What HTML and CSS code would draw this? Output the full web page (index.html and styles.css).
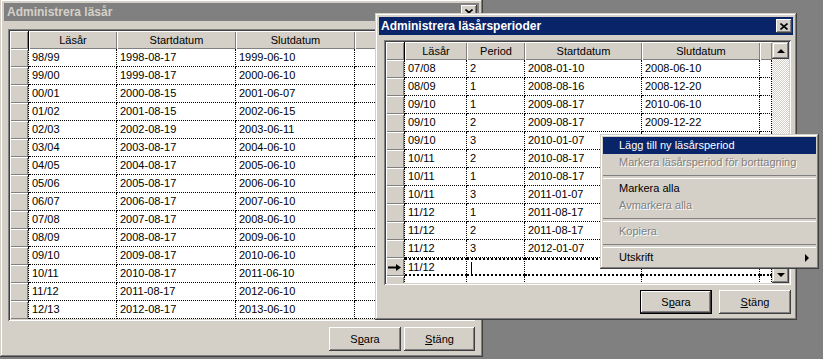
FILE: index.html
```html
<!DOCTYPE html>
<html lang="sv">
<head>
  <meta charset="UTF-8" />
  <title>Administrera läsår</title>
  <link rel="stylesheet" href="styles.css">
</head>
<body>
  <!-- Back window: läsår -->
  <div class="win win-left">
    <div class="titlebar inactive">
      <span class="title">Administrera läsår</span>
      <span class="close"><svg width="8" height="7" viewBox="0 0 8 7"><path d="M0.5 0.5L7.5 6.5M7.5 0.5L0.5 6.5" stroke="#000" stroke-width="1.6"/></svg></span>
    </div>
    <div class="win-body">
      <div class="grid grid-left">
        <div class="cells">
          <div class="row head">
            <div class="ind"></div>
            <div class="h c-l1">Läsår</div>
            <div class="h c-l2">Startdatum</div>
            <div class="h c-l3">Slutdatum</div>
            <div class="h c-rest"></div>
          </div>
          <div class="row"><div class="ind"></div><div class="c c-l1">98/99</div><div class="c c-l2">1998-08-17</div><div class="c c-l3">1999-06-10</div><div class="c c-rest"></div></div>
          <div class="row"><div class="ind"></div><div class="c c-l1">99/00</div><div class="c c-l2">1999-08-17</div><div class="c c-l3">2000-06-10</div><div class="c c-rest"></div></div>
          <div class="row"><div class="ind"></div><div class="c c-l1">00/01</div><div class="c c-l2">2000-08-15</div><div class="c c-l3">2001-06-07</div><div class="c c-rest"></div></div>
          <div class="row"><div class="ind"></div><div class="c c-l1">01/02</div><div class="c c-l2">2001-08-15</div><div class="c c-l3">2002-06-15</div><div class="c c-rest"></div></div>
          <div class="row"><div class="ind"></div><div class="c c-l1">02/03</div><div class="c c-l2">2002-08-19</div><div class="c c-l3">2003-06-11</div><div class="c c-rest"></div></div>
          <div class="row"><div class="ind"></div><div class="c c-l1">03/04</div><div class="c c-l2">2003-08-17</div><div class="c c-l3">2004-06-10</div><div class="c c-rest"></div></div>
          <div class="row"><div class="ind"></div><div class="c c-l1">04/05</div><div class="c c-l2">2004-08-17</div><div class="c c-l3">2005-06-10</div><div class="c c-rest"></div></div>
          <div class="row"><div class="ind"></div><div class="c c-l1">05/06</div><div class="c c-l2">2005-08-17</div><div class="c c-l3">2006-06-10</div><div class="c c-rest"></div></div>
          <div class="row"><div class="ind"></div><div class="c c-l1">06/07</div><div class="c c-l2">2006-08-17</div><div class="c c-l3">2007-06-10</div><div class="c c-rest"></div></div>
          <div class="row"><div class="ind"></div><div class="c c-l1">07/08</div><div class="c c-l2">2007-08-17</div><div class="c c-l3">2008-06-10</div><div class="c c-rest"></div></div>
          <div class="row"><div class="ind"></div><div class="c c-l1">08/09</div><div class="c c-l2">2008-08-17</div><div class="c c-l3">2009-06-10</div><div class="c c-rest"></div></div>
          <div class="row"><div class="ind"></div><div class="c c-l1">09/10</div><div class="c c-l2">2009-08-17</div><div class="c c-l3">2010-06-10</div><div class="c c-rest"></div></div>
          <div class="row"><div class="ind"></div><div class="c c-l1">10/11</div><div class="c c-l2">2010-08-17</div><div class="c c-l3">2011-06-10</div><div class="c c-rest"></div></div>
          <div class="row"><div class="ind"></div><div class="c c-l1">11/12</div><div class="c c-l2">2011-08-17</div><div class="c c-l3">2012-06-10</div><div class="c c-rest"></div></div>
          <div class="row"><div class="ind"></div><div class="c c-l1">12/13</div><div class="c c-l2">2012-08-17</div><div class="c c-l3">2013-06-10</div><div class="c c-rest"></div></div>
        </div>
      </div>
      <div class="buttons buttons-left">
        <button class="btn">S<u>p</u>ara</button>
        <button class="btn narrow"><u>S</u>täng</button>
      </div>
    </div>
  </div>

  <!-- Front window: läsårsperioder -->
  <div class="win win-right">
    <div class="titlebar active">
      <span class="title">Administrera läsårsperioder</span>
      <span class="close"><svg width="8" height="7" viewBox="0 0 8 7"><path d="M0.5 0.5L7.5 6.5M7.5 0.5L0.5 6.5" stroke="#000" stroke-width="1.6"/></svg></span>
    </div>
    <div class="win-body">
      <div class="grid grid-right">
        <div class="cells">
          <div class="row head">
            <div class="ind"></div>
            <div class="h c-r1">Läsår</div>
            <div class="h c-r2">Period</div>
            <div class="h c-r3">Startdatum</div>
            <div class="h c-r4">Slutdatum</div>
            <div class="h c-r5"></div>
          </div>
          <div class="row"><div class="ind"></div><div class="c c-r1">07/08</div><div class="c c-r2">2</div><div class="c c-r3">2008-01-10</div><div class="c c-r4">2008-06-10</div><div class="c c-r5"></div></div>
          <div class="row"><div class="ind"></div><div class="c c-r1">08/09</div><div class="c c-r2">1</div><div class="c c-r3">2008-08-16</div><div class="c c-r4">2008-12-20</div><div class="c c-r5"></div></div>
          <div class="row"><div class="ind"></div><div class="c c-r1">09/10</div><div class="c c-r2">1</div><div class="c c-r3">2009-08-17</div><div class="c c-r4">2010-06-10</div><div class="c c-r5"></div></div>
          <div class="row"><div class="ind"></div><div class="c c-r1">09/10</div><div class="c c-r2">2</div><div class="c c-r3">2009-08-17</div><div class="c c-r4">2009-12-22</div><div class="c c-r5"></div></div>
          <div class="row"><div class="ind"></div><div class="c c-r1">09/10</div><div class="c c-r2">3</div><div class="c c-r3">2010-01-07</div><div class="c c-r4"></div><div class="c c-r5"></div></div>
          <div class="row"><div class="ind"></div><div class="c c-r1">10/11</div><div class="c c-r2">2</div><div class="c c-r3">2010-08-17</div><div class="c c-r4"></div><div class="c c-r5"></div></div>
          <div class="row"><div class="ind"></div><div class="c c-r1">10/11</div><div class="c c-r2">1</div><div class="c c-r3">2010-08-17</div><div class="c c-r4"></div><div class="c c-r5"></div></div>
          <div class="row"><div class="ind"></div><div class="c c-r1">10/11</div><div class="c c-r2">3</div><div class="c c-r3">2011-01-07</div><div class="c c-r4"></div><div class="c c-r5"></div></div>
          <div class="row"><div class="ind"></div><div class="c c-r1">11/12</div><div class="c c-r2">1</div><div class="c c-r3">2011-08-17</div><div class="c c-r4"></div><div class="c c-r5"></div></div>
          <div class="row"><div class="ind"></div><div class="c c-r1">11/12</div><div class="c c-r2">2</div><div class="c c-r3">2011-08-17</div><div class="c c-r4"></div><div class="c c-r5"></div></div>
          <div class="row"><div class="ind"></div><div class="c c-r1">11/12</div><div class="c c-r2">3</div><div class="c c-r3">2012-01-07</div><div class="c c-r4"></div><div class="c c-r5"></div></div>
          <div class="row current">
            <div class="ind"><svg width="14" height="7" viewBox="0 0 14 7"><path d="M0 3.5H9" stroke="#000" stroke-width="2"/><path d="M8 0L13 3.5L8 7Z" fill="#000"/></svg></div>
            <div class="c c-r1">11/12</div><div class="c c-r2"><span class="caret"></span></div><div class="c c-r3"></div><div class="c c-r4"></div><div class="c c-r5"></div>
          </div>
          <div class="row"><div class="ind"></div><div class="c c-r1"></div><div class="c c-r2"></div><div class="c c-r3"></div><div class="c c-r4"></div><div class="c c-r5"></div></div>
        </div>
        <div class="vscroll">
          <div class="sb-btn"><span class="tri-up"></span></div>
          <div class="sb-track"></div>
          <div class="sb-btn"><span class="tri-down"></span></div>
        </div>
      </div>
      <div class="buttons buttons-right">
        <button class="btn default">S<u>p</u>ara</button>
        <button class="btn"><u>S</u>täng</button>
      </div>
    </div>
  </div>

  <!-- Context menu -->
  <div class="menu">
    <div class="item selected">Lägg till ny läsårsperiod</div>
    <div class="item disabled">Markera läsårsperiod för borttagning</div>
    <div class="sep"></div>
    <div class="item">Markera alla</div>
    <div class="item disabled">Avmarkera alla</div>
    <div class="sep"></div>
    <div class="item disabled">Kopiera</div>
    <div class="sep"></div>
    <div class="item has-sub">Utskrift<span class="sub-arrow"></span></div>
  </div>
</body>
</html>
```

FILE: styles.css
```css
* {
  box-sizing: border-box;
}

body {
  margin: 0;
  width: 823px;
  height: 359px;
  position: relative;
  overflow: hidden;
  background: #808080;
  font-family: "Liberation Sans", Arial, sans-serif;
  font-size: 11px;
  color: #000;
}

/* windows */
.win {
  position: absolute;
  display: flex;
  flex-direction: column;
  padding: 4px;
  background: #d4d0c8;
  box-shadow: inset -1px -1px #404040, inset 1px 1px #d4d0c8, inset -2px -2px #808080, inset 2px 2px #fff;
}

.win-left {
  left: 0;
  top: -1px;
  width: 483px;
  height: 358px;
}

.win-right {
  left: 375px;
  top: 13px;
  width: 422px;
  height: 307px;
}

.titlebar {
  height: 18px;
  flex: none;
  display: flex;
  align-items: center;
  justify-content: space-between;
  padding-left: 3px;
  font-weight: bold;
  font-size: 12px;
}

.titlebar.inactive {
  background: #808080;
  color: #d4d0c8;
}

.titlebar.active {
  background: #0a246a;
  color: #fff;
  padding-left: 2px;
}

.close {
  width: 16px;
  height: 14px;
  margin-right: 2px;
  display: flex;
  align-items: center;
  justify-content: center;
  background: #d4d0c8;
  box-shadow: inset -1px -1px #404040, inset 1px 1px #fff, inset -2px -2px #808080;
}

.active .close {
  margin-right: 1px;
}

.win-body {
  flex: 1;
  display: flex;
  flex-direction: column;
}

/* data grid */
.grid {
  display: flex;
  padding: 2px;
  background: #fff;
  box-shadow: inset 1px 1px #808080, inset -1px -1px #fff, inset 2px 2px #404040, inset -2px -2px #d4d0c8;
  overflow: hidden;
}

.grid-left {
  margin: 8px 4px 0 4px;
  height: 292px;
}

.grid-right {
  margin: 5px 0 0 5px;
  width: 407px;
  height: 245px;
}

.cells {
  flex: 1;
  overflow: hidden;
}

.grid-right .cells {
  flex: none;
  width: 386px;
}

.row {
  display: flex;
  height: 18px;
}

.ind {
  flex: none;
  width: 19px;
  height: 18px;
  display: flex;
  align-items: center;
  justify-content: center;
  background: #d4d0c8;
  border-right: 1px dotted #000;
  box-shadow: inset 1px 1px #fff, inset -1px -1px #808080;
}

.head .ind {
  border-right: 1px solid #000;
}

.h {
  flex: none;
  height: 18px;
  line-height: 18px;
  text-align: center;
  background: #d4d0c8;
  box-shadow: inset 1px 1px #fff, inset -1px -1px #808080;
  white-space: nowrap;
}

.c {
  flex: none;
  height: 18px;
  padding-left: 3px;
  line-height: 17px;
  background: #fff;
  border-right: 1px dotted #000;
  border-bottom: 1px dotted #000;
  white-space: nowrap;
  overflow: hidden;
}

.current .c {
  border-top: 2px dotted #000;
  border-bottom: 2px dotted #000;
  line-height: 14px;
}

.caret {
  display: inline-block;
  width: 1px;
  height: 12px;
  margin-left: 1px;
  background: #000;
  vertical-align: middle;
}

.c-l1 { width: 88px; }
.c-l2 { width: 119px; }
.c-l3 { width: 119px; }
.c-rest { flex: 1; border-right: none; }

.c-r1 { width: 62px; }
.c-r2 { width: 58px; }
.c-r3 { width: 117px; }
.c-r4 { width: 118px; }
.c-r5 { width: 12px; }

/* scrollbar */
.vscroll {
  width: 17px;
  flex: none;
  display: flex;
  flex-direction: column;
}

.sb-btn {
  height: 17px;
  flex: none;
  display: flex;
  align-items: center;
  justify-content: center;
  background: #d4d0c8;
  box-shadow: inset -1px -1px #404040, inset 1px 1px #d4d0c8, inset -2px -2px #808080, inset 2px 2px #fff;
}

.tri-up {
  width: 0;
  height: 0;
  border-left: 4px solid transparent;
  border-right: 4px solid transparent;
  border-bottom: 4px solid #000;
}

.tri-down {
  width: 0;
  height: 0;
  border-left: 4px solid transparent;
  border-right: 4px solid transparent;
  border-top: 4px solid #000;
}

.sb-track {
  flex: 1;
  background: repeating-conic-gradient(#fff 0 25%, #d4d0c8 0 50%) 0 0 / 2px 2px;
}

/* buttons */
.buttons {
  display: flex;
  justify-content: flex-end;
}

.buttons-left {
  margin-top: 6px;
  padding-right: 4px;
  gap: 3px;
}

.buttons-right {
  margin-top: 5px;
  padding-right: 2px;
  gap: 7px;
}

.btn {
  width: 72px;
  height: 24px;
  padding: 0;
  border: none;
  background: #d4d0c8;
  font: inherit;
  color: #000;
  box-shadow: inset -1px -1px #404040, inset 1px 1px #fff, inset -2px -2px #808080, inset 2px 2px #d4d0c8;
}

.btn.narrow {
  width: 71px;
}

.btn.default {
  box-shadow: inset 0 0 0 1px #000, inset -2px -2px #404040, inset 2px 2px #fff, inset -3px -3px #808080;
}

/* context menu */
.menu {
  position: absolute;
  left: 600px;
  top: 134px;
  width: 219px;
  padding: 3px;
  background: #d4d0c8;
  box-shadow: inset -1px -1px #404040, inset 1px 1px #d4d0c8, inset -2px -2px #808080, inset 2px 2px #fff;
}

.item {
  position: relative;
  height: 17px;
  line-height: 17px;
  padding-left: 16px;
  white-space: nowrap;
}

.item.selected {
  background: #0a246a;
  color: #fff;
}

.item.disabled {
  color: #808080;
  text-shadow: 1px 1px 0 #fff;
}

.sep {
  height: 9px;
  padding: 4px 0 3px;
}

.sep::before {
  content: "";
  display: block;
  height: 2px;
  border-top: 1px solid #808080;
  border-bottom: 1px solid #fff;
}

.sub-arrow {
  position: absolute;
  right: 7px;
  top: 5px;
  width: 0;
  height: 0;
  border-top: 4px solid transparent;
  border-bottom: 4px solid transparent;
  border-left: 4px solid #000;
}
```
